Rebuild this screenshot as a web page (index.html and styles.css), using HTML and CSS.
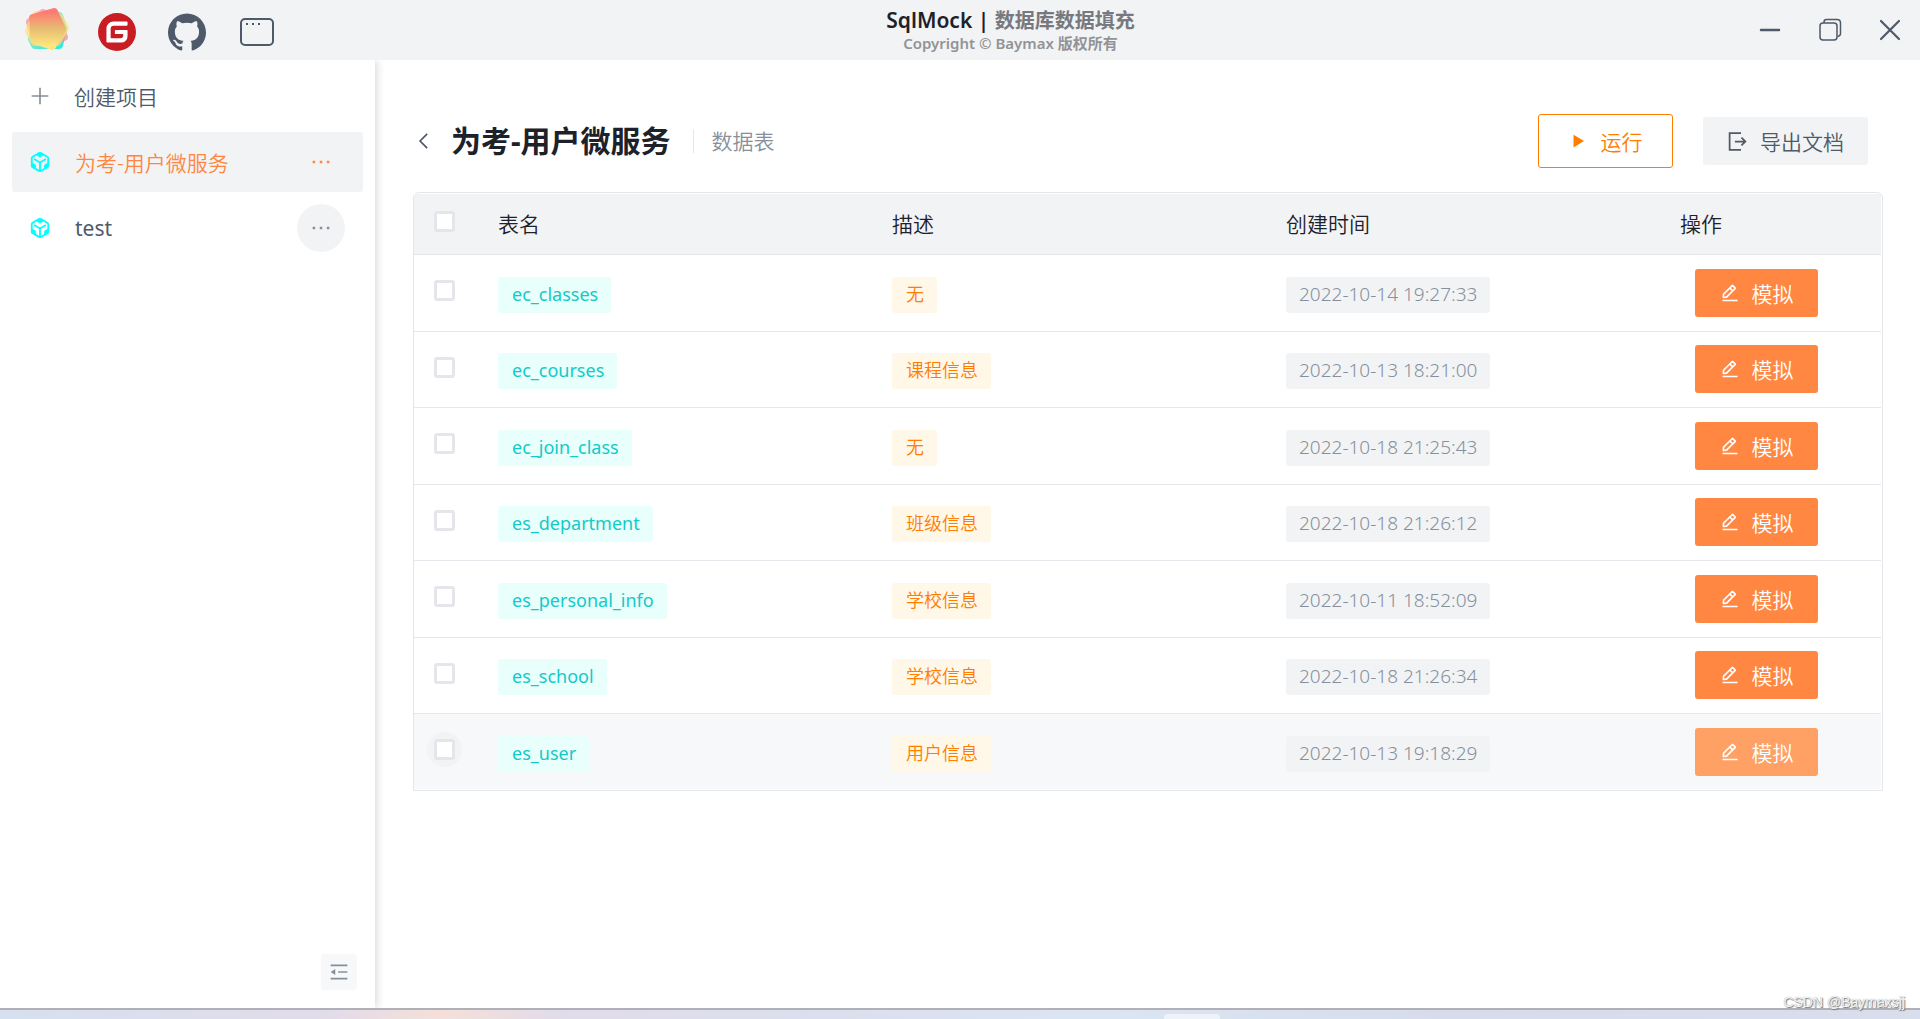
FILE: index.html
```html
<!DOCTYPE html>
<html lang="zh-CN">
<head>
    <meta charset="UTF-8">
    <meta name="viewport" content="width=device-width, initial-scale=1.0">
    <title>SqlMock</title>
    <link rel="stylesheet" href="styles.css">
</head>
<body>
    <svg class="sprite" aria-hidden="true">
        <symbol id="i-box" viewBox="0 0 24 24">
            <path fill="none" stroke="currentColor" stroke-width="2" d="M21 16V8a2 2 0 0 0-1-1.73l-7-4a2 2 0 0 0-2 0l-7 4A2 2 0 0 0 3 8v8a2 2 0 0 0 1 1.73l7 4a2 2 0 0 0 2 0l7-4A2 2 0 0 0 21 16zM5.500 8.700 12 12.500l6.500-3.800M12 22v-9.500"/>
            <path fill="currentColor" stroke="currentColor" d="M8 4 12 2l4 2-4 2.600zM3 13l4 2.300v4.200L3 17zM21 13l-4 2.300v4.200L21 17z"/>
        </symbol>
        <symbol id="i-more" viewBox="0 0 48 48">
            <path fill="currentColor" d="M4 21h6v6H4zM21 21h6v6h-6zM38 21h6v6h-6z"/>
        </symbol>
        <symbol id="i-edit" viewBox="0 0 48 48">
            <path fill="none" stroke="currentColor" stroke-width="4" d="m30.480 19.038 5.733-5.734a1 1 0 0 0 0-1.414l-5.586-5.586a1 1 0 0 0-1.414 0l-5.734 5.734m7 7L15.763 33.754a1 1 0 0 1-.59.286l-6.048.708a1 1 0 0 1-1.113-1.069l.477-6.310a1 1 0 0 1 .29-.631l14.700-14.700m7 7-7-7M6 42h36"/>
        </symbol>
    </svg>

    <header class="topbar">
        <nav class="links">
            <a href="#" class="link" aria-label="SqlMock">
                <svg width="44" height="44" viewBox="0 0 44 44">
                    <defs>
                        <linearGradient id="blob" x1="0" y1="0" x2="0" y2="1">
                            <stop offset="0" stop-color="#ff7a74"/>
                            <stop offset="0.5" stop-color="#e6bd72"/>
                            <stop offset="1" stop-color="#ffe680"/>
                        </linearGradient>
                        <linearGradient id="mint" x1="0" y1="0" x2="1" y2="1">
                            <stop offset="0" stop-color="#9be8b0"/>
                            <stop offset="1" stop-color="#00e8d8"/>
                        </linearGradient>
                    </defs>
                    <g stroke-width="8" stroke-linejoin="round">
                        <path fill="url(#mint)" stroke="url(#mint)" opacity=".8" d="M14 8 34 9l4 13-4 16-24 0-3-6z"/>
                        <path fill="#ff8a94" stroke="#ff8a94" opacity=".7" d="M5 15 18 6l15 7 6 17-12 6-16-2z"/>
                        <path fill="#ffe27a" stroke="#ffe27a" opacity=".7" d="M11 8 34 10l6 11-8 14-22 0-6-11z"/>
                        <path fill="url(#blob)" stroke="url(#blob)" d="M8 11 29 5l8 17-10 17-17-6z"/>
                    </g>
                </svg>
            </a>
            <a href="#" class="link" aria-label="Gitee">
                <svg width="38" height="38" viewBox="0 0 24 24">
                    <circle cx="12" cy="12" r="11" fill="#fff"/>
                    <path fill="#c71d23" d="M11.984 0A12 12 0 0 0 0 12a12 12 0 0 0 12 12 12 12 0 0 0 12-12A12 12 0 0 0 12 0zm6.090 5.333c.328 0 .593.266.592.593v1.482a.594.594 0 0 1-.593.592H9.777c-.982 0-1.778.796-1.778 1.778v5.630c0 .327.266.592.593.592h5.630c.982 0 1.778-.796 1.778-1.778v-.296a.593.593 0 0 0-.592-.593h-4.150a.592.592 0 0 1-.592-.592v-1.482a.593.593 0 0 1 .593-.592h6.815c.327 0 .593.265.593.592v3.408a4 4 0 0 1-4 4H5.926a.593.593 0 0 1-.593-.593V9.778a4.444 4.444 0 0 1 4.445-4.444h8.296z"/>
                </svg>
            </a>
            <a href="#" class="link" aria-label="GitHub">
                <svg width="38" height="38" viewBox="0 0 24 24">
                    <path fill="#4e5969" d="M12 .297c-6.630 0-12 5.373-12 12 0 5.303 3.438 9.800 8.205 11.385.6.113.82-.258.82-.577 0-.285-.01-1.040-.015-2.040-3.338.724-4.042-1.610-4.042-1.610C4.422 18.070 3.633 17.700 3.633 17.700c-1.087-.744.084-.729.084-.729 1.205.084 1.838 1.236 1.838 1.236 1.070 1.835 2.809 1.305 3.495.998.108-.776.417-1.305.76-1.605-2.665-.3-5.466-1.332-5.466-5.930 0-1.310.465-2.380 1.235-3.220-.135-.303-.54-1.523.105-3.176 0 0 1.005-.322 3.300 1.230.96-.267 1.980-.399 3-.405 1.020.006 2.040.138 3 .405 2.280-1.552 3.285-1.230 3.285-1.230.645 1.653.24 2.873.12 3.176.765.84 1.230 1.910 1.230 3.220 0 4.610-2.805 5.625-5.475 5.920.42.36.81 1.096.81 2.220 0 1.606-.015 2.896-.015 3.286 0 .315.21.69.825.57C20.565 22.092 24 17.592 24 12.297c0-6.627-5.373-12-12-12"/>
                </svg>
            </a>
            <a href="#" class="link" aria-label="窗口">
                <svg width="36" height="36" viewBox="0 0 36 36">
                    <rect x="2" y="5" width="32" height="26" rx="4" fill="none" stroke="#4e5969" stroke-width="2"/>
                    <path fill="#4e5969" d="M7 9h2v2H7zM13 9h2v2h-2zM19 9h2v2h-2z"/>
                </svg>
            </a>
        </nav>
        <div class="brand">
            <h1 class="brand-name">SqlMock | <small>数据库数据填充</small></h1>
            <p class="brand-copy">Copyright © Baymax 版权所有</p>
        </div>
        <div class="window-controls">
            <button type="button" aria-label="最小化">
                <svg width="24" height="24" viewBox="0 0 24 24"><path d="M3 12h18" stroke-width="2.500" stroke-linecap="round"/></svg>
            </button>
            <button type="button" aria-label="还原">
                <svg width="24" height="24" viewBox="0 0 24 24"><rect x="2" y="5" width="17" height="17" rx="3"/><path d="M6 5V4q0-2.500 2.500-2.500H19q3.500 0 3.500 3.500v10.500Q22.500 18 19.500 18.500"/></svg>
            </button>
            <button type="button" aria-label="关闭">
                <svg width="24" height="24" viewBox="0 0 24 24"><path d="m3 3 18 18M21 3 3 21" stroke-width="2.200" stroke-linecap="round"/></svg>
            </button>
        </div>
    </header>

    <div class="layout">
        <aside class="sidebar">
            <button type="button" class="create">
                <svg width="20" height="20" viewBox="0 0 48 48"><path fill="none" stroke="#86909c" stroke-width="4" d="M4 24h40M24 4v40"/></svg>
                创建项目
            </button>
            <ul class="projects">
                <li class="project active">
                    <svg class="box" width="22" height="22"><use href="#i-box"/></svg>
                    <a href="#">为考-用户微服务</a>
                    <button type="button" class="more" aria-label="更多"><svg width="20" height="20"><use href="#i-more"/></svg></button>
                </li>
                <li class="project">
                    <svg class="box" width="22" height="22"><use href="#i-box"/></svg>
                    <a href="#">test</a>
                    <button type="button" class="more hover" aria-label="更多"><svg width="20" height="20"><use href="#i-more"/></svg></button>
                </li>
            </ul>
            <button type="button" class="collapse" aria-label="收起">
                <svg width="20" height="20" viewBox="0 0 48 48"><path fill="none" stroke="#86909c" stroke-width="4" d="M44 8H4M44 24H22M44 40H4"/><path fill="#86909c" d="M15 17v14L4 24z"/></svg>
            </button>
        </aside>

        <main class="content">
            <div class="page-header">
                <button type="button" class="back" aria-label="返回">
                    <svg width="20" height="20" viewBox="0 0 48 48"><path fill="none" stroke="#4e5969" stroke-width="4" d="M34 7 17 24l17 17"/></svg>
                </button>
                <h2>为考-用户微服务</h2>
                <span class="subtitle">数据表</span>
                <button type="button" class="run">
                    <svg width="18" height="18" viewBox="0 0 48 48"><path fill="currentColor" d="M12 7v34l28-17z"/></svg>
                    运行
                </button>
                <button type="button" class="export">
                    <svg width="21" height="21" viewBox="0 0 48 48"><path fill="none" stroke="currentColor" stroke-width="4" d="M33 33.072 42 24.002l-9-9.072M18 24h24M32 43H6V5h26"/></svg>
                    导出文档
                </button>
            </div>

            <div class="table-box">
                <table>
                    <thead>
                        <tr>
                            <th class="check"><label><input type="checkbox" aria-label="全选"></label></th>
                            <th>表名</th>
                            <th>描述</th>
                            <th>创建时间</th>
                            <th class="action">操作</th>
                        </tr>
                    </thead>
                    <tbody>
                        <tr>
                            <td class="check"><label><input type="checkbox" aria-label="ec_classes"></label></td>
                            <td><span class="tag name">ec_classes</span></td>
                            <td><span class="tag desc">无</span></td>
                            <td><span class="tag time">2022-10-14 19:27:33</span></td>
                            <td class="action"><button type="button" class="mock"><svg width="20" height="20"><use href="#i-edit"/></svg>模拟</button></td>
                        </tr>
                        <tr>
                            <td class="check"><label><input type="checkbox" aria-label="ec_courses"></label></td>
                            <td><span class="tag name">ec_courses</span></td>
                            <td><span class="tag desc">课程信息</span></td>
                            <td><span class="tag time">2022-10-13 18:21:00</span></td>
                            <td class="action"><button type="button" class="mock"><svg width="20" height="20"><use href="#i-edit"/></svg>模拟</button></td>
                        </tr>
                        <tr>
                            <td class="check"><label><input type="checkbox" aria-label="ec_join_class"></label></td>
                            <td><span class="tag name">ec_join_class</span></td>
                            <td><span class="tag desc">无</span></td>
                            <td><span class="tag time">2022-10-18 21:25:43</span></td>
                            <td class="action"><button type="button" class="mock"><svg width="20" height="20"><use href="#i-edit"/></svg>模拟</button></td>
                        </tr>
                        <tr>
                            <td class="check"><label><input type="checkbox" aria-label="es_department"></label></td>
                            <td><span class="tag name">es_department</span></td>
                            <td><span class="tag desc">班级信息</span></td>
                            <td><span class="tag time">2022-10-18 21:26:12</span></td>
                            <td class="action"><button type="button" class="mock"><svg width="20" height="20"><use href="#i-edit"/></svg>模拟</button></td>
                        </tr>
                        <tr>
                            <td class="check"><label><input type="checkbox" aria-label="es_personal_info"></label></td>
                            <td><span class="tag name">es_personal_info</span></td>
                            <td><span class="tag desc">学校信息</span></td>
                            <td><span class="tag time">2022-10-11 18:52:09</span></td>
                            <td class="action"><button type="button" class="mock"><svg width="20" height="20"><use href="#i-edit"/></svg>模拟</button></td>
                        </tr>
                        <tr>
                            <td class="check"><label><input type="checkbox" aria-label="es_school"></label></td>
                            <td><span class="tag name">es_school</span></td>
                            <td><span class="tag desc">学校信息</span></td>
                            <td><span class="tag time">2022-10-18 21:26:34</span></td>
                            <td class="action"><button type="button" class="mock"><svg width="20" height="20"><use href="#i-edit"/></svg>模拟</button></td>
                        </tr>
                        <tr class="hover">
                            <td class="check"><label><input type="checkbox" aria-label="es_user"></label></td>
                            <td><span class="tag name">es_user</span></td>
                            <td><span class="tag desc">用户信息</span></td>
                            <td><span class="tag time">2022-10-13 19:18:29</span></td>
                            <td class="action"><button type="button" class="mock"><svg width="20" height="20"><use href="#i-edit"/></svg>模拟</button></td>
                        </tr>
                    </tbody>
                </table>
            </div>
        </main>
    </div>

    <footer class="desktop"><span class="desktop-tab"></span></footer>
    <div class="watermark">CSDN @Baymaxsjj</div>
</body>
</html>
```
FILE: styles.css
```css
* {
    box-sizing: border-box;
}

body {
    margin: 0;
    min-height: 100vh;
    display: flex;
    flex-direction: column;
    font-family: "Noto Sans", "Noto Sans CJK SC", sans-serif;
    font-size: 21px;
    font-weight: 350;
    color: #1d2129;
    background-color: #ffffff;
}

button {
    font: inherit;
    color: inherit;
    border: none;
    padding: 0;
    background: none;
    cursor: pointer;
}

a {
    color: inherit;
    text-decoration: none;
}

svg {
    display: block;
    flex: none;
}

.sprite {
    position: absolute;
    width: 0;
    height: 0;
}

/* top bar */
.topbar {
    display: flex;
    height: 60px;
    background-color: #f2f3f5;
    position: relative;
    z-index: 1;
}

.links {
    display: flex;
    align-items: center;
    gap: 30px;
    padding: 4px 4px 0 27px;
}

.link {
    width: 40px;
    display: flex;
    justify-content: center;
}

.link:first-child {
    padding-bottom: 7px;
}

.brand {
    flex: 1;
    display: flex;
    flex-direction: column;
    align-items: center;
    justify-content: center;
    font-weight: 600;
}

.brand-name {
    margin: 0;
    font-size: 21px;
    font-weight: 600;
    line-height: 24px;
}

.brand-name small {
    font-size: 20px;
    font-weight: 700;
    color: #77797e;
}

.brand-copy {
    margin: 0;
    font-size: 15px;
    line-height: 20px;
    color: #929396;
}

.window-controls {
    display: flex;
}

.window-controls button {
    width: 60px;
    display: flex;
    align-items: center;
    justify-content: center;
}

.window-controls svg {
    fill: none;
    stroke: #4e5969;
    stroke-width: 1.5;
}

/* sidebar */
.layout {
    flex: 1;
    display: flex;
}

.sidebar {
    width: 375px;
    display: flex;
    flex-direction: column;
    gap: 6px;
    padding: 6px 12px 18px;
    color: #4e5969;
    box-shadow: 2px 0 8px rgba(0, 0, 0, 0.15);
}

.create,
.project {
    display: flex;
    align-items: center;
    height: 60px;
    padding: 0 18px 0 17px;
    gap: 24px;
    border-radius: 3px;
}

.projects {
    display: flex;
    flex-direction: column;
    gap: 6px;
    margin: 0;
    padding: 0;
    list-style: none;
}

.create {
    padding-left: 18px;
}

.project a {
    flex: 1;
    font-weight: 400;
}

.project.active {
    color: #ff8640;
    background-color: #f2f3f5;
}

.project.active a {
    font-weight: 350;
}

.box {
    color: #00ffff;
}

.more {
    width: 48px;
    height: 48px;
    display: flex;
    align-items: center;
    justify-content: center;
    border-radius: 50%;
}

.more.hover {
    color: #86909c;
    background-color: #f2f3f5;
}

.collapse {
    width: 36px;
    height: 36px;
    margin: auto 6px 0 auto;
    display: flex;
    align-items: center;
    justify-content: center;
    border-radius: 3px;
    background-color: #f7f8fa;
}

/* content */
.content {
    flex: 1;
    padding: 54px 37px 54px 38px;
}

.page-header {
    display: flex;
    align-items: center;
    height: 54px;
    margin-bottom: 24px;
    padding-right: 15px;
}

.page-header h2 {
    margin: 0 22px 0 18px;
    font-size: 30px;
    font-weight: 700;
    line-height: 42px;
}

.subtitle {
    color: #86909c;
    line-height: 24px;
    padding-left: 18px;
    border-left: 1px solid #e5e6eb;
}

.run,
.export {
    display: flex;
    align-items: center;
    justify-content: center;
    height: 48px;
    border-radius: 3px;
}

.run {
    width: 135px;
    height: 54px;
    gap: 14px;
    margin: 0 30px 0 auto;
    color: #ff7d00;
    border: 1px solid #ff7d00;
}

.export {
    width: 165px;
    gap: 12px;
    color: #4e5969;
    background-color: #f2f3f5;
}

.table-box {
    padding: 1px 1px 1px 0;
    border: 1px solid #e5e6eb;
    border-radius: 6px 6px 0 0;
}

table {
    width: 100%;
    table-layout: fixed;
    border-collapse: separate;
    border-spacing: 0;
}

th,
td {
    height: 77px;
    padding: 0 24px;
    text-align: left;
    border-bottom: 1px solid #e5e6eb;
}

th {
    height: 61px;
    padding-bottom: 2px;
    font-weight: 350;
    background-color: #f2f3f5;
}

tbody tr:nth-child(even) td {
    height: 76px;
    padding-bottom: 1px;
}

tbody tr:last-child td {
    height: 75px;
    border-bottom: none;
}

th.check,
tbody tr td.check {
    width: 60px;
    padding: 0 0 5px 13px;
}

.check label {
    display: flex;
    align-items: center;
    justify-content: center;
    width: 35px;
    height: 35px;
    border-radius: 50%;
}

.action {
    width: 225px;
}

input[type="checkbox"] {
    appearance: none;
    width: 21px;
    height: 21px;
    margin: 0;
    border: 3px solid #e5e6eb;
    border-radius: 3px;
    background-color: #ffffff;
}

.tag {
    display: block;
    width: fit-content;
    height: 36px;
    margin-top: 4px;
    padding: 0 13px 0 14px;
    font-size: 18px;
    line-height: 35px;
    border-radius: 3px;
}

.name {
    font-weight: 400;
    color: #14c9c9;
    background-color: #e8fffb;
}

.desc {
    color: #ff7d00;
    background-color: #fff7e8;
}

.time {
    padding: 0 13px;
    font-size: 19px;
    color: #86909c;
    background-color: #f2f3f5;
}

.mock {
    width: 123px;
    height: 48px;
    margin-left: 15px;
    display: flex;
    align-items: center;
    justify-content: center;
    gap: 12px;
    color: #ffffff;
    border-radius: 3px;
    background-color: #ff8742;
}

tr.hover td {
    background-color: #f7f8fa;
}

tr.hover .mock {
    background-color: #ffa064;
}

tr.hover label {
    background-color: #f2f3f5;
}

/* strip under the window */
.desktop {
    display: flex;
    height: 11px;
    padding-top: 4px;
    border-top: 2px solid #b0b1b8;
    background: linear-gradient(90deg, #d6e0ee 0%, #e2dcea 17%, #f5dfd8 23%, #e2dcea 29%, #dbdfed 42%, #dbe5f2 58%, #d6dcea 75%, #d8deec 100%);
}

.desktop-tab {
    width: 56px;
    margin: 0 700px 0 auto;
    border-radius: 4px 4px 0 0;
    background-color: #eef3fa;
}

.watermark {
    position: absolute;
    right: 15px;
    bottom: 8px;
    font-family: "Liberation Sans", sans-serif;
    font-size: 14px;
    font-weight: 400;
    line-height: 18px;
    color: #f4f4f4;
    text-shadow: 1px 1px 1px #777777, 0 0 1px #999999;
}
```
